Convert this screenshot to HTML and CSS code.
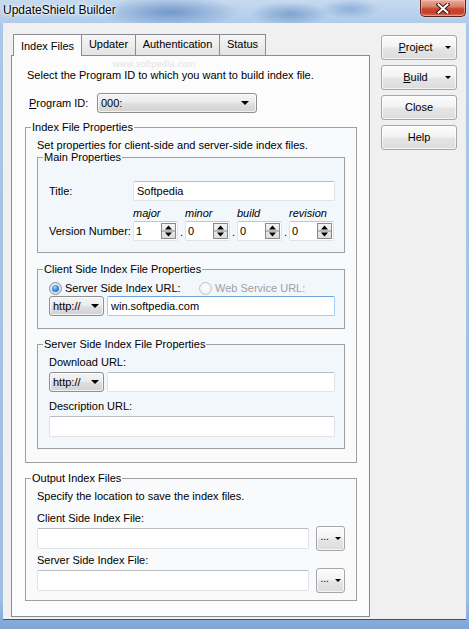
FILE: index.html
```html
<!DOCTYPE html>
<html>
<head>
<meta charset="utf-8">
<title>UpdateShield Builder</title>
<link rel="stylesheet" href="styles.css">
</head>
<body>
<div class="window">
  <div class="titlebar">
    <span class="title">UpdateShield Builder</span>
    <div class="close-btn">
      <svg width="14" height="11" viewBox="0 0 14 11">
        <path d="M2.5 1.5 L11.5 9.5 M11.5 1.5 L2.5 9.5" stroke="#3a1710" stroke-width="4" stroke-linecap="square" fill="none"/>
        <path d="M2.5 1.5 L11.5 9.5 M11.5 1.5 L2.5 9.5" stroke="#ffffff" stroke-width="2" stroke-linecap="square" fill="none"/>
      </svg>
    </div>
  </div>
  <div class="client">
    <div class="tabcontrol">
      <div class="tabstrip">
        <div class="tab active">Index Files</div>
        <div class="tab t-updater">Updater</div>
        <div class="tab t-auth">Authentication</div>
        <div class="tab t-status">Status</div>
      </div>
      <div class="tabpanel">
        <div class="watermark">www.softpedia.com</div>
        <p class="intro">Select the Program ID to which you want to build index file.</p>
        <div class="pid-row">
          <span class="pid-label"><u>P</u>rogram ID:</span>
          <div class="combo pid-combo"><span class="combo-text">000:</span><span class="combo-arrow"></span></div>
        </div>

        <fieldset class="grp outer">
          <legend>Index File Properties</legend>
          <p class="grp-intro">Set properties for client-side and server-side index files.</p>

          <fieldset class="grp inner main">
            <legend>Main Properties</legend>
            <div class="row title-row">
              <span class="lbl">Title:</span>
              <div class="textbox title-box">Softpedia</div>
            </div>
            <div class="ver-labels"><span>major</span><span>minor</span><span>build</span><span>revision</span></div>
            <div class="row ver-row">
              <span class="lbl">Version Number:</span>
              <div class="spin"><span class="val">1</span><span class="spin-btn"><svg width="15" height="16" viewBox="0 0 15 16"><polygon points="4,6.5 11,6.5 7.5,2.5" fill="#000"/><line x1="1" y1="8" x2="14" y2="8" stroke="#8a8a8a" stroke-width="1"/><polygon points="4,9.5 11,9.5 7.5,13.5" fill="#000"/></svg></span></div>
              <span class="dot">.</span>
              <div class="spin"><span class="val">0</span><span class="spin-btn"><svg width="15" height="16" viewBox="0 0 15 16"><polygon points="4,6.5 11,6.5 7.5,2.5" fill="#000"/><line x1="1" y1="8" x2="14" y2="8" stroke="#8a8a8a" stroke-width="1"/><polygon points="4,9.5 11,9.5 7.5,13.5" fill="#000"/></svg></span></div>
              <span class="dot">.</span>
              <div class="spin"><span class="val">0</span><span class="spin-btn"><svg width="15" height="16" viewBox="0 0 15 16"><polygon points="4,6.5 11,6.5 7.5,2.5" fill="#000"/><line x1="1" y1="8" x2="14" y2="8" stroke="#8a8a8a" stroke-width="1"/><polygon points="4,9.5 11,9.5 7.5,13.5" fill="#000"/></svg></span></div>
              <span class="dot">.</span>
              <div class="spin"><span class="val">0</span><span class="spin-btn"><svg width="15" height="16" viewBox="0 0 15 16"><polygon points="4,6.5 11,6.5 7.5,2.5" fill="#000"/><line x1="1" y1="8" x2="14" y2="8" stroke="#8a8a8a" stroke-width="1"/><polygon points="4,9.5 11,9.5 7.5,13.5" fill="#000"/></svg></span></div>
            </div>
          </fieldset>

          <fieldset class="grp inner client-grp">
            <legend>Client Side Index File Properties</legend>
            <div class="row radio-row">
              <div class="radio-item first"><span class="radio checked"><span class="radio-dot"></span></span><span>Server Side Index URL:</span></div>
              <div class="radio-item disabled"><span class="radio"></span><span>Web Service URL:</span></div>
            </div>
            <div class="row url-row">
              <div class="combo http-combo"><span class="combo-text">http://</span><span class="combo-arrow"></span></div>
              <div class="textbox url-box focused">win.softpedia.com</div>
            </div>
          </fieldset>

          <fieldset class="grp inner server-grp">
            <legend>Server Side Index File Properties</legend>
            <p class="field-label">Download URL:</p>
            <div class="row url-row dl-row">
              <div class="combo http-combo"><span class="combo-text">http://</span><span class="combo-arrow"></span></div>
              <div class="textbox url-box"></div>
            </div>
            <p class="field-label desc-label">Description URL:</p>
            <div class="textbox desc-box"></div>
          </fieldset>
        </fieldset>

        <fieldset class="grp outer output">
          <legend>Output Index Files</legend>
          <p class="grp-intro2">Specify the location to save the index files.</p>
          <p class="field-label out-label">Client Side Index File:</p>
          <div class="row file-row">
            <div class="textbox file-box"></div>
            <div class="btn browse"><span class="browse-dots">...</span><span class="btn-arrow"></span></div>
          </div>
          <p class="field-label out-label2">Server Side Index File:</p>
          <div class="row file-row">
            <div class="textbox file-box"></div>
            <div class="btn browse"><span class="browse-dots">...</span><span class="btn-arrow"></span></div>
          </div>
        </fieldset>
      </div>
    </div>

    <div class="buttons">
      <div class="btn cmd menu"><span class="btn-label"><u>P</u>roject</span><span class="btn-arrow"></span></div>
      <div class="btn cmd menu"><span class="btn-label"><u>B</u>uild</span><span class="btn-arrow"></span></div>
      <div class="btn cmd">Close</div>
      <div class="btn cmd">Help</div>
    </div>
  </div>
</div>
</body>
</html>
```

FILE: styles.css
```css
* { box-sizing: border-box; }
html, body { margin: 0; padding: 0; }
body {
  width: 469px;
  height: 629px;
  overflow: hidden;
  font-family: "Liberation Sans", Arial, sans-serif;
  font-size: 11px;
  color: #000;
  background: #a9c6e6;
}
p { margin: 0; }

.window {
  width: 469px;
  height: 629px;
  display: flex;
  flex-direction: column;
  background:
    radial-gradient(ellipse 70px 16px at 170px 12px, rgba(55,105,175,.55), rgba(55,105,175,0)),
    radial-gradient(ellipse 40px 12px at 290px 14px, rgba(55,105,175,.45), rgba(55,105,175,0)),
    radial-gradient(ellipse 30px 10px at 350px 9px, rgba(70,120,190,.4), rgba(70,120,190,0)),
    linear-gradient(to bottom, #c6daef 0, #aac7e7 30px, #9dbde2 600px, #7fa5d6 629px);
}

/* Title bar */
.titlebar {
  height: 23px;
  flex: none;
  display: flex;
  justify-content: space-between;
  align-items: flex-start;
  padding-left: 3px;
}
.title {
  font-family: "Liberation Sans", Arial, sans-serif;
  font-size: 12px;
  line-height: 20px;
  color: #000;
  text-shadow: 0 0 5px #fff, 0 0 3px #fff, 0 0 1px #fff;
}
.close-btn {
  width: 46px;
  height: 17px;
  margin-right: 3px;
  display: flex;
  align-items: center;
  justify-content: center;
  border: 1px solid #5a2318;
  border-top: none;
  border-radius: 0 0 5px 5px;
  background: linear-gradient(to bottom, #e9a999 0, #d9826f 40%, #c84731 55%, #c4402a 80%, #d8735a 100%);
  box-shadow: inset 0 0 0 1px rgba(255,210,200,.45), 0 0 2px rgba(255,255,255,.7);
}

/* Client area */
.client {
  flex: none;
  height: 597px;
  margin: 0 3px;
  background: #f0f0f0;
  display: flex;
  align-items: flex-start;
  gap: 11px;
  padding: 11px 0 0 8px;
  border-bottom: 1px solid #34547f;
}

.tabcontrol {
  width: 359px;
  display: flex;
  flex-direction: column;
}
.tabstrip {
  height: 21px;
  display: flex;
  align-items: flex-start;
  padding-left: 2px;
}
.tab {
  height: 21px;
  border: 1px solid #898c95;
  border-bottom: none;
  background: linear-gradient(to bottom, #f6f6f6, #e4e4e4);
  text-align: center;
  line-height: 13px;
  padding-top: 3px;
  margin-left: -1px;
  white-space: nowrap;
}
.tab.active {
  margin-left: 0;
  width: 69px;
  height: 22px;
  padding-top: 5px;
  background: #fcfcfc;
  position: relative;
  z-index: 1;
}
.t-updater { width: 55px; }
.t-auth { width: 85px; }
.t-status { width: 47px; }

.tabpanel {
  height: 562px;
  border: 1px solid #898c95;
  background: #fcfcfc;
  position: relative;
  display: flex;
  flex-direction: column;
  align-items: flex-start;
}
.watermark {
  position: absolute;
  left: 101px;
  top: 3px;
  font-size: 9px;
  color: #e4e4e4;
  letter-spacing: 0.3px;
}

.intro {
  margin: 13px 0 0 15px;
  line-height: 13px;
  white-space: nowrap;
}
.pid-row {
  margin-top: 11px;
  padding-left: 17px;
  height: 20px;
  display: flex;
  align-items: center;
}
.pid-label { width: 68px; }

/* Combos & buttons */
.combo, .btn {
  border: 1px solid #8e8f8f;
  border-radius: 3px;
  background: linear-gradient(to bottom, #f5f5f5 0, #ececec 45%, #dedede 55%, #d2d2d2 100%);
  box-shadow: inset 0 0 0 1px rgba(255,255,255,.7);
}
.combo {
  height: 20px;
  display: flex;
  align-items: center;
  padding: 0 0 0 3px;
}
.combo-text { flex: 1; line-height: 13px; }
.combo-arrow {
  width: 0;
  height: 0;
  border-left: 4px solid transparent;
  border-right: 4px solid transparent;
  border-top: 4px solid #000;
  margin-right: 7px;
}
.pid-combo { width: 160px; }
.http-combo { width: 55px; }
.http-combo .combo-arrow { margin-right: 4px; }

.btn {
  display: flex;
  align-items: center;
  justify-content: center;
  border-color: #a7a7a7;
  background: linear-gradient(to bottom, #fcfcfc 0, #f3f3f3 45%, #e5e5e5 55%, #dcdcdc 100%);
}
.btn-arrow {
  width: 0;
  height: 0;
  border-left: 3px solid transparent;
  border-right: 3px solid transparent;
  border-top: 3px solid #000;
}

/* Group boxes */
.grp {
  margin: 0;
  border: 1px solid #a0a0a0;
  min-inline-size: 0;
  padding: 5px 11px 13px 11px;
}
.grp legend {
  padding: 0 1px;
  margin-left: -6px;
  line-height: 13px;
  white-space: nowrap;
}
.outer {
  margin: 8px 0 0 13px;
  width: 332px;
  background: #f9fafb;
}
.grp-intro {
  line-height: 12px;
  white-space: nowrap;
}
.inner {
  width: 308px;
  background: #f2f7fc;
}
.main {
  padding: 17px 9px 11px 11px;
}
.row {
  display: flex;
  align-items: center;
}
.title-row { height: 20px; }
.lbl { width: 84px; flex: none; white-space: nowrap; }

.textbox {
  height: 20px;
  background: #fff;
  border: 1px solid #dfe3e8;
  border-top-color: #b9bcc2;
  border-radius: 2px;
  line-height: 18px;
  padding-left: 3px;
  white-space: nowrap;
  overflow: hidden;
}
.textbox.focused {
  border-color: #a9cdf0;
  border-top-color: #6ea4d9;
}
.title-box { width: 202px; }

.ver-labels {
  margin-top: 6px;
  padding-left: 84px;
  line-height: 13px;
  font-style: italic;
  display: flex;
}
.ver-labels span { width: 52px; flex: none; }
.ver-row { margin-top: 1px; height: 20px; }
.spin {
  width: 45px;
  height: 20px;
  flex: none;
  background: #fff;
  border: 1px solid #dfe3e8;
  border-top-color: #c4c7cc;
  border-radius: 2px;
  display: flex;
  align-items: center;
}
.spin .val { flex: 1; padding-left: 2px; }
.spin-btn {
  width: 15px;
  height: 16px;
  margin-right: 1px;
  border: 1px solid #8a8a8a;
  background: linear-gradient(to bottom, #f4f4f4, #dcdcdc);
  display: flex;
}
.spin-btn svg { margin: -1px; }
.dot {
  width: 7px;
  flex: none;
  text-align: center;
  padding-top: 2px;
}

.client-grp {
  margin-top: 10px;
  padding: 5px 9px 12px 11px;
}
.radio-row { height: 14px; }
.radio-item { display: flex; align-items: center; gap: 3px; white-space: nowrap; }
.radio-item.first { width: 150px; }
.radio-item.disabled { color: #a0a0a0; }
.radio {
  width: 13px;
  height: 13px;
  border-radius: 50%;
  border: 1px solid #c3c3c3;
  background: radial-gradient(circle at 50% 40%, #ffffff, #eaeaea);
  display: flex;
  align-items: center;
  justify-content: center;
}
.radio.checked {
  border-color: #8e8f8f;
  background: radial-gradient(circle at 50% 40%, #f2f2f2, #d6d6d6);
}
.radio-dot {
  width: 7px;
  height: 7px;
  border-radius: 50%;
  background: radial-gradient(circle at 40% 35%, #a4d6ff 0, #3a8ee6 45%, #1b5ea8 100%);
}
.url-row { margin-top: 1px; height: 20px; gap: 3px; }
.url-box { width: 228px; }

.server-grp {
  margin-top: 9px;
  padding: 5px 9px 11px 11px;
}
.field-label { line-height: 13px; white-space: nowrap; }
.dl-row { margin-top: 3px; }
.desc-label { margin-top: 8px; }
.desc-box { margin-top: 3px; width: 286px; height: 21px; }

.output {
  margin-top: 9px;
  padding: 5px 11px 7px 11px;
}
.grp-intro2 { line-height: 13px; white-space: nowrap; }
.out-label { margin-top: 9px; }
.out-label2 { margin-top: 3px; }
.file-row { margin-top: 1px; height: 25px; gap: 7px; }
.file-box { width: 274px; height: 21px; }
.browse {
  width: 29px;
  height: 25px;
  gap: 6px;
  padding-bottom: 1px;
}
.browse-dots { font-size: 10px; line-height: 10px; padding-bottom: 2px; }

/* Right command buttons */
.buttons {
  margin-top: 1px;
  width: 76px;
  display: flex;
  flex-direction: column;
  gap: 5px;
}
.cmd {
  height: 25px;
  line-height: 13px;
}
.cmd.menu { justify-content: flex-start; }
.cmd .btn-label { flex: 1; text-align: center; padding-left: 4px; }
.cmd .btn-arrow { margin-right: 5px; }
```
